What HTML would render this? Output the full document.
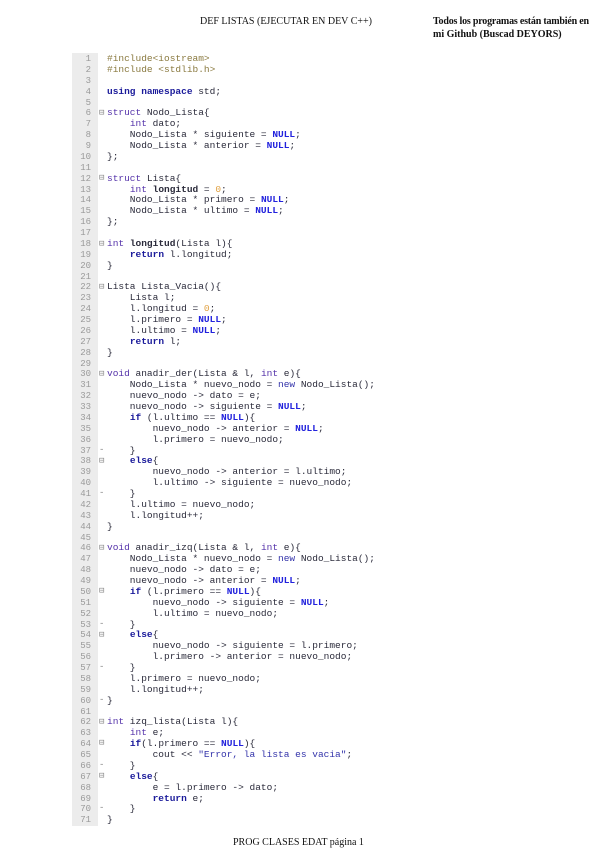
<!DOCTYPE html>
<html><head><meta charset="utf-8"><style>
html,body{margin:0;padding:0;background:#fff;width:601px;height:848px;overflow:hidden;position:relative}
.h{position:absolute;font-family:"Liberation Serif",serif;font-size:10px;color:#111;white-space:nowrap}
#gut{position:absolute;left:72px;top:53px;width:26px;height:773px;background:#ececec}
pre{margin:0;position:absolute;font-family:"Liberation Mono",monospace;font-size:9.5px;line-height:10.87px}
#nums{left:72px;top:54px;width:19px;text-align:right;color:#9a9a9a;font-size:9px}
#code{left:107px;top:54px;color:#2a2a3a}
.f{position:absolute;left:99px;font-family:"Liberation Mono",monospace;font-size:9px;color:#888;line-height:10.87px}
.k{color:#5533aa}
.b{color:#1a1a9a;font-weight:bold}
.n{color:#2222dd;font-weight:bold}
.o{color:#e0a040}
.p{color:#8a7a40}
.s{color:#3333aa}
</style></head><body>
<div class="h" style="left:200px;top:16px">DEF LISTAS (EJECUTAR EN DEV C++)</div>
<div class="h" style="left:433px;top:16px;font-weight:bold;letter-spacing:-0.2px">Todos los programas están también en</div>
<div class="h" style="left:433px;top:29px;font-weight:bold">mi Github (Buscad DEYORS)</div>
<div id="gut"></div>
<pre id="nums">1
2
3
4
5
6
7
8
9
10
11
12
13
14
15
16
17
18
19
20
21
22
23
24
25
26
27
28
29
30
31
32
33
34
35
36
37
38
39
40
41
42
43
44
45
46
47
48
49
50
51
52
53
54
55
56
57
58
59
60
61
62
63
64
65
66
67
68
69
70
71</pre>
<div class="f" style="top:108px">⊟</div>
<div class="f" style="top:173px">⊟</div>
<div class="f" style="top:239px">⊟</div>
<div class="f" style="top:282px">⊟</div>
<div class="f" style="top:369px">⊟</div>
<div class="f" style="top:445px">-</div>
<div class="f" style="top:456px">⊟</div>
<div class="f" style="top:488px">-</div>
<div class="f" style="top:543px">⊟</div>
<div class="f" style="top:586px">⊟</div>
<div class="f" style="top:619px">-</div>
<div class="f" style="top:630px">⊟</div>
<div class="f" style="top:662px">-</div>
<div class="f" style="top:695px">-</div>
<div class="f" style="top:717px">⊟</div>
<div class="f" style="top:738px">⊟</div>
<div class="f" style="top:760px">-</div>
<div class="f" style="top:771px">⊟</div>
<div class="f" style="top:803px">-</div>
<pre id="code"><span class="p">#include&lt;iostream&gt;</span>
<span class="p">#include &lt;stdlib.h&gt;</span>

<span class="b">using namespace</span> std;

<span class="k">struct</span> Nodo_Lista{
    <span class="k">int</span> dato;
    Nodo_Lista * siguiente = <span class="n">NULL</span>;
    Nodo_Lista * anterior = <span class="n">NULL</span>;
};

<span class="k">struct</span> Lista{
    <span class="k">int</span> <b>longitud</b> = <span class="o">0</span>;
    Nodo_Lista * primero = <span class="n">NULL</span>;
    Nodo_Lista * ultimo = <span class="n">NULL</span>;
};

<span class="k">int</span> <b>longitud</b>(Lista l){
    <span class="b">return</span> l.longitud;
}

Lista Lista_Vacia(){
    Lista l;
    l.longitud = <span class="o">0</span>;
    l.primero = <span class="n">NULL</span>;
    l.ultimo = <span class="n">NULL</span>;
    <span class="b">return</span> l;
}

<span class="k">void</span> anadir_der(Lista &amp; l, <span class="k">int</span> e){
    Nodo_Lista * nuevo_nodo = <span class="s">new</span> Nodo_Lista();
    nuevo_nodo -&gt; dato = e;
    nuevo_nodo -&gt; siguiente = <span class="n">NULL</span>;
    <span class="b">if</span> (l.ultimo == <span class="n">NULL</span>){
        nuevo_nodo -&gt; anterior = <span class="n">NULL</span>;
        l.primero = nuevo_nodo;
    }
    <span class="b">else</span>{
        nuevo_nodo -&gt; anterior = l.ultimo;
        l.ultimo -&gt; siguiente = nuevo_nodo;
    }
    l.ultimo = nuevo_nodo;
    l.longitud++;
}

<span class="k">void</span> anadir_izq(Lista &amp; l, <span class="k">int</span> e){
    Nodo_Lista * nuevo_nodo = <span class="s">new</span> Nodo_Lista();
    nuevo_nodo -&gt; dato = e;
    nuevo_nodo -&gt; anterior = <span class="n">NULL</span>;
    <span class="b">if</span> (l.primero == <span class="n">NULL</span>){
        nuevo_nodo -&gt; siguiente = <span class="n">NULL</span>;
        l.ultimo = nuevo_nodo;
    }
    <span class="b">else</span>{
        nuevo_nodo -&gt; siguiente = l.primero;
        l.primero -&gt; anterior = nuevo_nodo;
    }
    l.primero = nuevo_nodo;
    l.longitud++;
}

<span class="k">int</span> izq_lista(Lista l){
    <span class="k">int</span> e;
    <span class="b">if</span>(l.primero == <span class="n">NULL</span>){
        cout &lt;&lt; <span class="s">"Error, la lista es vacia"</span>;
    }
    <span class="b">else</span>{
        e = l.primero -&gt; dato;
        <span class="b">return</span> e;
    }
}</pre>
<div class="h" style="left:233px;top:837px">PROG CLASES EDAT página 1</div>
</body></html>
